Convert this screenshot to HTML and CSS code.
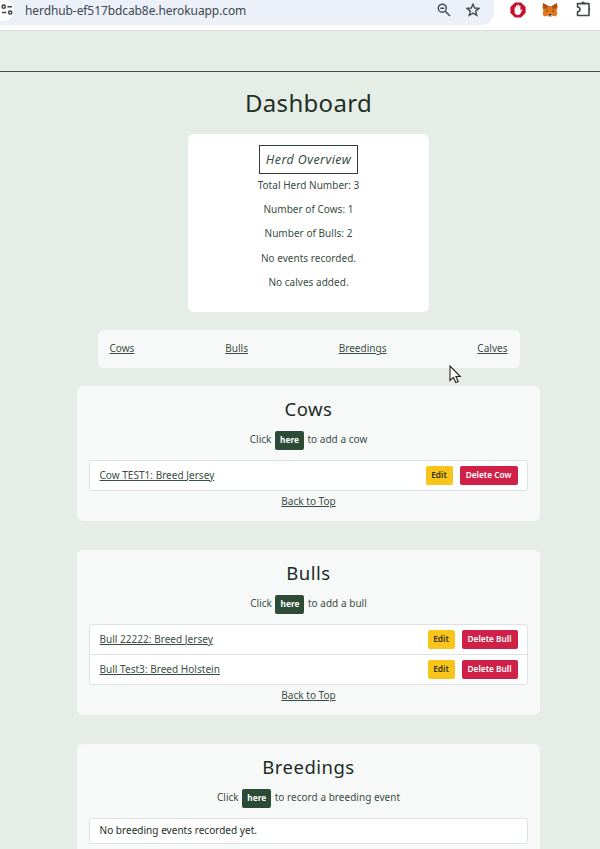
FILE: index.html
```html
<!DOCTYPE html>
<html lang="en">
<head>
<meta charset="utf-8">
<title>Dashboard</title>
<link rel="stylesheet" href="styles.css">
</head>
<body>
<header class="browser">
  <div class="address">
    <span class="site-info"><svg width="14" height="14" viewBox="0 0 14 14" fill="none" stroke="#3c4043" stroke-width="1.5"><circle cx="3.7" cy="3.7" r="1.6"/><path d="M7.5 3.7H12M2 9.5H6.3"/><circle cx="10.2" cy="9.5" r="1.6"/></svg></span>
    <span class="url">herdhub-ef517bdcab8e.herokuapp.com</span>
    <svg class="search" width="14" height="14" viewBox="0 0 14 14" fill="none" stroke="#484c52" stroke-width="1.5"><circle cx="5.3" cy="5.2" r="4"/><path d="M8.3 8.2L13 13M3.3 5.2H7.3"/></svg>
    <svg class="star" width="14" height="14" viewBox="0 0 14 14" fill="none" stroke="#484c52" stroke-width="1.4"><path d="M7 1.2L8.7 5L12.9 5.4L9.7 8.1L10.7 12.3L7 10.1L3.3 12.3L4.3 8.1L1.1 5.4L5.3 5Z"/></svg>
  </div>
  <svg class="blocker" width="16" height="16" viewBox="0 0 16 16"><path d="M5 .4H11L15.6 5V11L11 15.6H5L.4 11V5Z" fill="#c8102e"/><path d="M4.6 8V5.4Q5.2 4.6 5.8 5.4V7.2L6 3.6Q6.7 2.8 7.3 3.6V7L7.6 3Q8.3 2.2 8.9 3V7L9.2 3.8Q9.9 3 10.4 3.8V8.6L11.4 7.4Q12.3 7.2 12.2 8L10.3 11.7Q9.6 13 7.6 13Q4.8 12.7 4.6 10Z" fill="#fff"/></svg>
  <svg class="fox" width="16" height="14" viewBox="0 0 16 14"><path d="M1 0L6.2 3H9.8L15 0L15.6 4L14.6 8L15.4 10.5L14 13.5L10.5 12.8L9.5 13.8H6.5L5.5 12.8L2 13.5L.6 10.5L1.4 8L.4 4Z" fill="#e2761b"/><path d="M1 0L6.2 3L5.2 6L1.2 5ZM15 0L9.8 3L10.8 6L14.8 5Z" fill="#a95218"/><path d="M4 7L6.3 8.3L4.7 8.7ZM12 7L9.7 8.3L11.3 8.7Z" fill="#33343b"/><path d="M5.5 12L6.6 10.8H9.4L10.5 12L9.5 13.8H6.5Z" fill="#d7c1b3"/><path d="M6.6 11H9.4L9.2 12.6H6.8Z" fill="#2b211f"/></svg>
  <svg class="puzzle" width="16" height="16" viewBox="0 0 16 16" fill="none" stroke="#44474b" stroke-width="1.6"><path d="M1.5 2.6H13V14.5H1.5V10.8Q4 10.5 4 8.4Q4 6.3 1.5 6Z" stroke-linejoin="round"/><path d="M5.3 2.5A1.9 1.9 0 0 1 9.1 2.5ZM13 6.7A1.9 1.9 0 0 1 13 10.3Z" fill="#44474b" stroke="none"/></svg>
</header>
<div class="topbar"></div>
<main>
  <h1>Dashboard</h1>
  <section class="overview">
    <h2>Herd Overview</h2>
    <p>Total Herd Number: 3</p>
    <p>Number of Cows: 1</p>
    <p>Number of Bulls: 2</p>
    <p>No events recorded.</p>
    <p>No calves added.</p>
  </section>
  <nav><a>Cows</a><a>Bulls</a><a>Breedings</a><a>Calves</a></nav>
  <section class="card">
    <h3>Cows</h3>
    <div class="add"><span>Click</span><a class="here">here</a><span>to add a cow</span></div>
    <ul>
      <li><a class="name">Cow TEST1: Breed Jersey</a><button class="edit">Edit</button><button class="delete cow">Delete Cow</button></li>
    </ul>
    <a class="back">Back to Top</a>
  </section>
  <section class="card">
    <h3>Bulls</h3>
    <div class="add"><span>Click</span><a class="here">here</a><span>to add a bull</span></div>
    <ul>
      <li><a class="name">Bull 22222: Breed Jersey</a><button class="edit">Edit</button><button class="delete">Delete Bull</button></li>
      <li><a class="name">Bull Test3: Breed Holstein</a><button class="edit">Edit</button><button class="delete">Delete Bull</button></li>
    </ul>
    <a class="back">Back to Top</a>
  </section>
  <section class="card">
    <h3>Breedings</h3>
    <div class="add"><span>Click</span><a class="here">here</a><span>to record a breeding event</span></div>
    <ul><li class="empty"><span class="name">No breeding events recorded yet.</span></li></ul>
  </section>
</main>
<svg class="cursor" width="13" height="20" viewBox="0 0 13 20"><path d="M1 1V15.5L4.4 12.4L6.8 17.5L9.2 16.4L6.9 11.5H11.3Z" fill="#fff" stroke="#222" stroke-width="1.1"/></svg>
</body>
</html>
```
FILE: styles.css
```css
* { box-sizing: border-box; }
body {
  margin: 0;
  height: 849px;
  overflow: hidden;
  background: #e6ede6;
  color: #3b4d43;
  font: 10px/16px "Noto Sans", sans-serif;
  letter-spacing: 0.03px;
}
h1, h2, h3, p, ul { margin: 0; padding: 0; font-weight: 400; }
svg { display: block; flex: none; }
.browser {
  display: flex;
  height: 31px;
  background: #fff;
  border-bottom: 1px solid #d9dfda;
}
.address {
  display: flex;
  width: 494px;
  height: 25px;
  background: #ebf0f9;
  border-radius: 0 0 13px 0;
}
.site-info {
  width: 14px;
  height: 21px;
  padding-top: 3px;
  background: #fff;
  border-radius: 0 11px 11px 0;
}
.url {
  width: 412px;
  margin-left: 11px;
  color: #40464c;
  font-size: 12px;
  line-height: 21px;
  letter-spacing: -0.09px;
}
.search { margin-top: 3px; }
.star { margin: 3px 0 0 15px; }
.blocker { margin: 2px 0 0 16px; }
.fox { margin: 3px 0 0 16px; }
.puzzle { margin: 1px 0 0 18px; }
.topbar { height: 41px; border-bottom: 1px solid #3e5044; }
main {
  width: 464px;
  margin-left: 76.5px;
  display: flex;
  flex-direction: column;
  align-items: center;
}
h1 {
  margin-top: 13px;
  color: #1d3026;
  font-size: 24px;
  line-height: 36px;
  letter-spacing: 0.3px;
}
.overview {
  width: 241px;
  height: 178px;
  margin-top: 13px;
  padding-top: 11px;
  background: #fff;
  border-radius: 6px;
  text-align: center;
}
h2 {
  width: 99px;
  height: 29px;
  margin: 0 auto 3px;
  border: 1px solid #333b37;
  font-size: 12.5px;
  line-height: 27px;
  font-style: italic;
  letter-spacing: 0.4px;
  white-space: nowrap;
}
.overview p { height: 24.2px; }
nav {
  display: flex;
  justify-content: space-between;
  width: 422px;
  height: 38px;
  margin: 18px 0;
  padding: 10px 12px;
  background: #f7f9f9;
  border-radius: 6px;
}
a { text-decoration: underline; text-underline-offset: 1px; }
.card {
  width: 463px;
  margin-bottom: 29px;
  padding: 9px 12px 12px;
  background: #f7f9f9;
  border-radius: 6px;
  text-align: center;
}
h3 {
  color: #1d2b25;
  font-size: 18.5px;
  line-height: 28px;
  letter-spacing: 0.5px;
}
.add {
  display: flex;
  justify-content: center;
  margin: 8px 0 10px;
  gap: 3.5px;
  height: 19px;
}
.here {
  width: 29px;
  height: 19px;
  background: #2d4c37;
  border-radius: 2px;
  color: #fff;
  font-size: 8.3px;
  font-weight: 700;
  line-height: 18px;
  letter-spacing: 0;
  text-decoration: none;
}
ul {
  list-style: none;
  border: 1px solid #dfe2e5;
  border-radius: 3px;
  background: #fff;
}
li {
  display: flex;
  align-items: center;
  height: 29px;
  padding: 0 9.5px;
}
li + li { height: 30px; border-top: 1px solid #dfe2e5; }
.name { margin: -2px auto 0 0; }
button {
  height: 19px;
  padding: 0 0 1px;
  border: 0;
  border-radius: 2px;
  font: 600 8.3px/18px "Noto Sans", sans-serif;
}
.edit { width: 27px; margin-right: 7px; background: #f9c51b; color: #333018; }
.delete { width: 56px; background: #cf2148; color: #fff; }
.cow { width: 58px; }
.back { display: block; width: max-content; margin: 2px auto 0; }
.empty { height: 24px; color: #252b28; }
.cursor { position: absolute; left: 449px; top: 365px; }
```
